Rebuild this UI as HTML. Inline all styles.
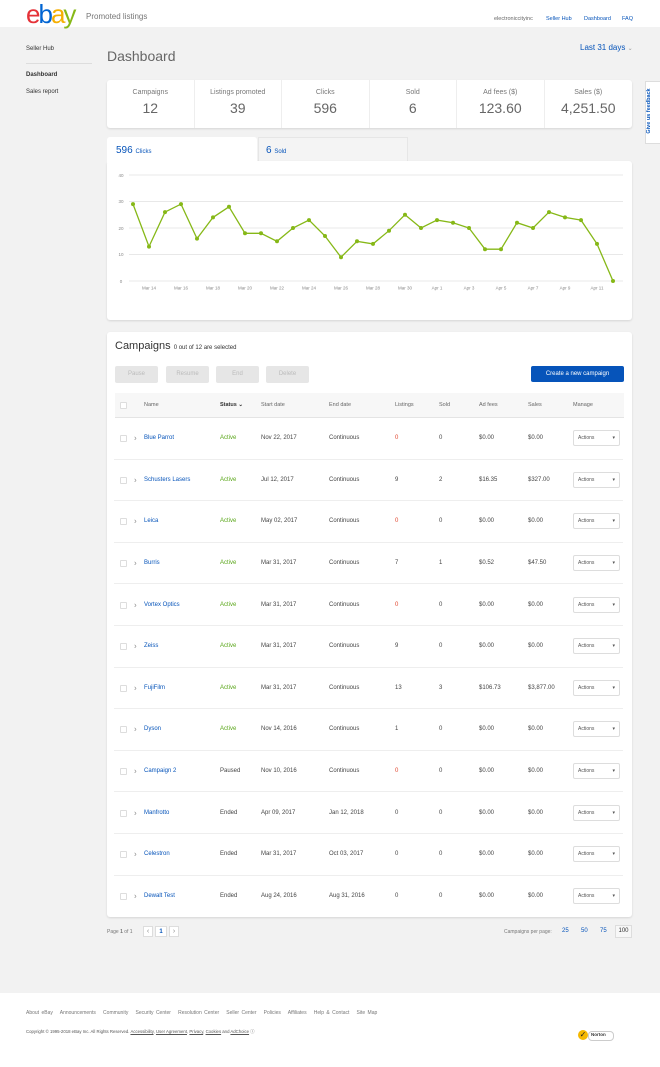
<!DOCTYPE html>
<html><head><meta charset="utf-8"><style>
*{box-sizing:border-box;margin:0;padding:0}
body{width:660px;height:1067px;background:#f2f2f2;font-family:"Liberation Sans",Arial,sans-serif;color:#333;position:relative;overflow:hidden}
.a{position:absolute;white-space:nowrap}
.blue{color:#0654ba}
.card{position:absolute;background:#fff;border-radius:3px;box-shadow:0 1px 2px rgba(0,0,0,.12)}
.stat{position:absolute;top:0;height:48px;width:87.5px;text-align:center;border-right:1px solid #eee}
.stat .l{font-size:7px;color:#777;margin-top:9px}
.stat .v{font-size:14px;color:#666;margin-top:4px}
.btn{position:absolute;top:366px;height:17px;width:43px;background:#e6e6e6;color:#bbb;font-size:6px;text-align:center;line-height:17px;border-radius:2px}
.row{position:absolute;left:114px;width:509px;height:41.6px;border-bottom:1px solid #eee;font-size:6px;color:#444}
.row span{position:absolute;top:50%;transform:translateY(-50%)}
.row span.ch{color:#888;font-size:8px}
.cb{position:absolute;left:6px;top:50%;margin-top:-3px;width:7px;height:7px;border:1px solid #ddd;border-radius:1px}
.act{position:absolute;left:459px;top:50%;margin-top:-8px;width:47px;height:16px;border:1px solid #ddd;border-radius:2px;font-size:5px;color:#555;line-height:14px;padding-left:4px}
.act:after{content:"▾";position:absolute;right:4px;font-size:5px}
.ft{font-size:5px;color:#777}
</style></head><body>
<div class="a" style="left:0;top:0;width:660px;height:27px;background:#fff"></div>
<div class="a" style="left:26px;top:1px;font-size:26px;letter-spacing:-2px;line-height:26px"><span style="color:#e53238">e</span><span style="color:#0064d2">b</span><span style="color:#f5af02">a</span><span style="color:#86b817">y</span></div>
<div class="a" style="left:86px;top:12px;font-size:8px;color:#777">Promoted listings</div>
<div class="a" style="left:494px;top:16px;font-size:5.5px;color:#666">electroniccityinc</div>
<div class="a blue" style="left:546px;top:16px;font-size:5.5px">Seller Hub</div>
<div class="a blue" style="left:584px;top:16px;font-size:5.5px">Dashboard</div>
<div class="a blue" style="left:622px;top:16px;font-size:5.5px">FAQ</div>

<div class="a" style="left:26px;top:46px;font-size:6px;color:#333">Seller Hub</div>
<div class="a" style="left:26px;top:63px;width:66px;border-top:1px solid #ddd"></div>
<div class="a" style="left:26px;top:72px;font-size:6px;font-weight:bold;color:#333">Dashboard</div>
<div class="a" style="left:26px;top:89px;font-size:6px;color:#333">Sales report</div>
<div class="a" style="left:107px;top:48px;font-size:14px;color:#666">Dashboard</div>
<div class="a blue" style="left:580px;top:43px;font-size:8px">Last 31 days <span style="font-size:6px;color:#999">⌄</span></div>

<div class="card" style="left:107px;top:80px;width:525px;height:48px">
<div class="stat" style="left:0"><div class="l">Campaigns</div><div class="v">12</div></div>
<div class="stat" style="left:87.5px"><div class="l">Listings promoted</div><div class="v">39</div></div>
<div class="stat" style="left:175px"><div class="l">Clicks</div><div class="v">596</div></div>
<div class="stat" style="left:262.5px"><div class="l">Sold</div><div class="v">6</div></div>
<div class="stat" style="left:350px"><div class="l">Ad fees ($)</div><div class="v">123.60</div></div>
<div class="stat" style="left:437.5px;border:none"><div class="l">Sales ($)</div><div class="v">4,251.50</div></div>
</div>
<div class="a" style="left:645px;top:81px;width:15px;height:63px;background:#fff;border:1px solid #ddd;border-right:none"></div>
<div class="a" style="left:646px;top:137px;transform:rotate(-90deg);transform-origin:0 0;font-size:5.5px;font-weight:bold;color:#0654ba;width:52px;text-align:center">Give us feedback</div>

<div class="a" style="left:258px;top:137px;width:150px;height:25px;background:#f4f4f4;border:1px solid #e6e6e6"></div>
<div class="a blue" style="left:266px;top:145px;font-size:10px">6 <span style="font-size:6px">Sold</span></div>
<div class="card" style="left:107px;top:161px;width:525px;height:159px"></div>
<div class="a" style="left:107px;top:137px;width:150px;height:26px;background:#fff;border-radius:3px 3px 0 0"></div>
<div class="a blue" style="left:116px;top:145px;font-size:10px">596 <span style="font-size:6px">Clicks</span></div>
<svg class="a" style="left:0;top:0" width="660" height="330">
<g stroke="#e8e8e8" stroke-width="1">
<line x1="129" x2="623" y1="175" y2="175"/><line x1="129" x2="623" y1="201.5" y2="201.5"/><line x1="129" x2="623" y1="228" y2="228"/><line x1="129" x2="623" y1="254.5" y2="254.5"/><line x1="129" x2="623" y1="281" y2="281"/></g>
<g font-family="Liberation Sans" font-size="4.5" fill="#888" text-anchor="middle">
<text x="121" y="177">40</text><text x="121" y="203">30</text><text x="121" y="230">20</text><text x="121" y="256">10</text><text x="121" y="283">0</text>
<text x="149" y="289.5">Mar 14</text><text x="181" y="289.5">Mar 16</text><text x="213" y="289.5">Mar 18</text><text x="245" y="289.5">Mar 20</text><text x="277" y="289.5">Mar 22</text><text x="309" y="289.5">Mar 24</text><text x="341" y="289.5">Mar 26</text><text x="373" y="289.5">Mar 28</text><text x="405" y="289.5">Mar 30</text><text x="437" y="289.5">Apr 1</text><text x="469" y="289.5">Apr 3</text><text x="501" y="289.5">Apr 5</text><text x="533" y="289.5">Apr 7</text><text x="565" y="289.5">Apr 9</text><text x="597" y="289.5">Apr 11</text></g>
<polyline fill="none" stroke="#86b817" stroke-width="1.3" points="133,204.1 149,246.6 165,212.1 181,204.1 197,238.6 213,217.4 229,206.8 245,233.3 261,233.3 277,241.3 293,228 309,220.1 325,236 341,257.2 357,241.3 373,243.9 389,230.7 405,214.7 421,228 437,220.1 453,222.7 469,228 485,249.2 501,249.2 517,222.7 533,228 549,212.1 565,217.4 581,220.1 597,243.9 613,281"/>
<g fill="#86b817"><circle cx="133" cy="204.1" r="2"/><circle cx="149" cy="246.6" r="2"/><circle cx="165" cy="212.1" r="2"/><circle cx="181" cy="204.1" r="2"/><circle cx="197" cy="238.6" r="2"/><circle cx="213" cy="217.4" r="2"/><circle cx="229" cy="206.8" r="2"/><circle cx="245" cy="233.3" r="2"/><circle cx="261" cy="233.3" r="2"/><circle cx="277" cy="241.3" r="2"/><circle cx="293" cy="228" r="2"/><circle cx="309" cy="220.1" r="2"/><circle cx="325" cy="236" r="2"/><circle cx="341" cy="257.2" r="2"/><circle cx="357" cy="241.3" r="2"/><circle cx="373" cy="243.9" r="2"/><circle cx="389" cy="230.7" r="2"/><circle cx="405" cy="214.7" r="2"/><circle cx="421" cy="228" r="2"/><circle cx="437" cy="220.1" r="2"/><circle cx="453" cy="222.7" r="2"/><circle cx="469" cy="228" r="2"/><circle cx="485" cy="249.2" r="2"/><circle cx="501" cy="249.2" r="2"/><circle cx="517" cy="222.7" r="2"/><circle cx="533" cy="228" r="2"/><circle cx="549" cy="212.1" r="2"/><circle cx="565" cy="217.4" r="2"/><circle cx="581" cy="220.1" r="2"/><circle cx="597" cy="243.9" r="2"/><circle cx="613" cy="281" r="2"/></g>
</svg>

<div class="card" style="left:107px;top:332px;width:525px;height:585px"></div>
<div class="a" style="left:115px;top:340px;font-size:11px;color:#333">Campaigns <span style="font-size:6px">0 out of 12 are selected</span></div>
<div class="btn" style="left:115px">Pause</div><div class="btn" style="left:166px">Resume</div><div class="btn" style="left:216px">End</div><div class="btn" style="left:266px">Delete</div>
<div class="a" style="left:531px;top:366px;width:93px;height:16px;background:#0654ba;border-radius:2px;color:#fff;font-size:6px;text-align:center;line-height:16px">Create a new campaign</div>
<div class="a" style="left:115px;top:393px;width:509px;height:25px;background:#f7f7f7;border-bottom:1px solid #e4e4e4;font-size:5.5px;color:#666">
<div class="cb" style="left:5px;top:9px;margin:0;background:#fff"></div>
<span class="a" style="left:29px;top:9px">Name</span><span class="a" style="left:105px;top:9px;font-weight:bold;color:#333">Status ⌄</span><span class="a" style="left:146px;top:9px">Start date</span><span class="a" style="left:214px;top:9px">End date</span><span class="a" style="left:280px;top:9px">Listings</span><span class="a" style="left:324px;top:9px">Sold</span><span class="a" style="left:364px;top:9px">Ad fees</span><span class="a" style="left:413px;top:9px">Sales</span><span class="a" style="left:458px;top:9px">Manage</span></div>

<div class="row" style="top:418px"><div class="cb"></div><span class="ch" style="left:20px">›</span><span class="blue" style="left:30px">Blue Parrot</span><span style="left:106px;color:#5ba71b">Active</span><span style="left:147px">Nov 22, 2017</span><span style="left:215px">Continuous</span><span style="left:281px;color:#e0442c">0</span><span style="left:325px">0</span><span style="left:365px">$0.00</span><span style="left:414px">$0.00</span><div class="act">Actions</div></div>
<div class="row" style="top:459.6px"><div class="cb"></div><span class="ch" style="left:20px">›</span><span class="blue" style="left:30px">Schusters Lasers</span><span style="left:106px;color:#5ba71b">Active</span><span style="left:147px">Jul 12, 2017</span><span style="left:215px">Continuous</span><span style="left:281px">9</span><span style="left:325px">2</span><span style="left:365px">$16.35</span><span style="left:414px">$327.00</span><div class="act">Actions</div></div>
<div class="row" style="top:501.2px"><div class="cb"></div><span class="ch" style="left:20px">›</span><span class="blue" style="left:30px">Leica</span><span style="left:106px;color:#5ba71b">Active</span><span style="left:147px">May 02, 2017</span><span style="left:215px">Continuous</span><span style="left:281px;color:#e0442c">0</span><span style="left:325px">0</span><span style="left:365px">$0.00</span><span style="left:414px">$0.00</span><div class="act">Actions</div></div>
<div class="row" style="top:542.8px"><div class="cb"></div><span class="ch" style="left:20px">›</span><span class="blue" style="left:30px">Burris</span><span style="left:106px;color:#5ba71b">Active</span><span style="left:147px">Mar 31, 2017</span><span style="left:215px">Continuous</span><span style="left:281px">7</span><span style="left:325px">1</span><span style="left:365px">$0.52</span><span style="left:414px">$47.50</span><div class="act">Actions</div></div>
<div class="row" style="top:584.4px"><div class="cb"></div><span class="ch" style="left:20px">›</span><span class="blue" style="left:30px">Vortex Optics</span><span style="left:106px;color:#5ba71b">Active</span><span style="left:147px">Mar 31, 2017</span><span style="left:215px">Continuous</span><span style="left:281px;color:#e0442c">0</span><span style="left:325px">0</span><span style="left:365px">$0.00</span><span style="left:414px">$0.00</span><div class="act">Actions</div></div>
<div class="row" style="top:626px"><div class="cb"></div><span class="ch" style="left:20px">›</span><span class="blue" style="left:30px">Zeiss</span><span style="left:106px;color:#5ba71b">Active</span><span style="left:147px">Mar 31, 2017</span><span style="left:215px">Continuous</span><span style="left:281px">9</span><span style="left:325px">0</span><span style="left:365px">$0.00</span><span style="left:414px">$0.00</span><div class="act">Actions</div></div>
<div class="row" style="top:667.6px"><div class="cb"></div><span class="ch" style="left:20px">›</span><span class="blue" style="left:30px">FujiFilm</span><span style="left:106px;color:#5ba71b">Active</span><span style="left:147px">Mar 31, 2017</span><span style="left:215px">Continuous</span><span style="left:281px">13</span><span style="left:325px">3</span><span style="left:365px">$106.73</span><span style="left:414px">$3,877.00</span><div class="act">Actions</div></div>
<div class="row" style="top:709.2px"><div class="cb"></div><span class="ch" style="left:20px">›</span><span class="blue" style="left:30px">Dyson</span><span style="left:106px;color:#5ba71b">Active</span><span style="left:147px">Nov 14, 2016</span><span style="left:215px">Continuous</span><span style="left:281px">1</span><span style="left:325px">0</span><span style="left:365px">$0.00</span><span style="left:414px">$0.00</span><div class="act">Actions</div></div>
<div class="row" style="top:750.8px"><div class="cb"></div><span class="ch" style="left:20px">›</span><span class="blue" style="left:30px">Campaign 2</span><span style="left:106px">Paused</span><span style="left:147px">Nov 10, 2016</span><span style="left:215px">Continuous</span><span style="left:281px;color:#e0442c">0</span><span style="left:325px">0</span><span style="left:365px">$0.00</span><span style="left:414px">$0.00</span><div class="act">Actions</div></div>
<div class="row" style="top:792.4px"><div class="cb"></div><span class="ch" style="left:20px">›</span><span class="blue" style="left:30px">Manfrotto</span><span style="left:106px">Ended</span><span style="left:147px">Apr 09, 2017</span><span style="left:215px">Jan 12, 2018</span><span style="left:281px">0</span><span style="left:325px">0</span><span style="left:365px">$0.00</span><span style="left:414px">$0.00</span><div class="act">Actions</div></div>
<div class="row" style="top:834px"><div class="cb"></div><span class="ch" style="left:20px">›</span><span class="blue" style="left:30px">Celestron</span><span style="left:106px">Ended</span><span style="left:147px">Mar 31, 2017</span><span style="left:215px">Oct 03, 2017</span><span style="left:281px">0</span><span style="left:325px">0</span><span style="left:365px">$0.00</span><span style="left:414px">$0.00</span><div class="act">Actions</div></div>
<div class="row" style="top:875.6px;border:none"><div class="cb"></div><span class="ch" style="left:20px">›</span><span class="blue" style="left:30px">Dewalt Test</span><span style="left:106px">Ended</span><span style="left:147px">Aug 24, 2016</span><span style="left:215px">Aug 31, 2016</span><span style="left:281px">0</span><span style="left:325px">0</span><span style="left:365px">$0.00</span><span style="left:414px">$0.00</span><div class="act">Actions</div></div>

<div class="a ft" style="left:107px;top:929px">Page <b>1</b> of 1</div>
<div class="a" style="left:143px;top:926px;width:10px;height:11px;border:1px solid #ddd;background:#fff;font-size:7px;color:#888;text-align:center;line-height:9px">‹</div>
<div class="a" style="left:155px;top:926px;width:12px;height:11px;border:1px solid #ddd;background:#fff;font-size:6px;color:#0654ba;text-align:center;line-height:10px;font-weight:bold">1</div>
<div class="a" style="left:169px;top:926px;width:10px;height:11px;border:1px solid #ddd;background:#fff;font-size:7px;color:#888;text-align:center;line-height:9px">›</div>
<div class="a ft" style="left:504px;top:929px">Campaigns per page:</div>
<div class="a blue" style="left:562px;top:928px;font-size:6px">25</div>
<div class="a blue" style="left:581px;top:928px;font-size:6px">50</div>
<div class="a blue" style="left:600px;top:928px;font-size:6px">75</div>
<div class="a" style="left:615px;top:925px;width:17px;height:13px;border:1px solid #ddd;background:#f7f7f7;font-size:6px;color:#333;text-align:center;line-height:11px">100</div>

<div class="a" style="left:0;top:993px;width:660px;height:74px;background:#fff"></div>
<div class="a ft" style="left:26px;top:1010px;word-spacing:1px">About eBay &nbsp; Announcements &nbsp; Community &nbsp; Security Center &nbsp; Resolution Center &nbsp; Seller Center &nbsp; Policies &nbsp; Affiliates &nbsp; Help &amp; Contact &nbsp; Site Map</div>
<div class="a" style="left:26px;top:1029px;font-size:4.3px;color:#555">Copyright © 1995-2018 eBay Inc. All Rights Reserved. <u>Accessibility</u>, <u>User Agreement</u>, <u>Privacy</u>, <u>Cookies</u> and <u>AdChoice</u> ⓘ</div>
<div class="a" style="left:578px;top:1030px;width:10px;height:10px;border-radius:50%;background:#f5b800;color:#222;font-size:8px;line-height:10px;text-align:center">✓</div>
<div class="a" style="left:588px;top:1031px;width:26px;height:10px;border:1px solid #ccc;border-radius:4px;font-size:4.5px;font-weight:bold;padding-left:2px;line-height:6px">Norton</div>
</body></html>
